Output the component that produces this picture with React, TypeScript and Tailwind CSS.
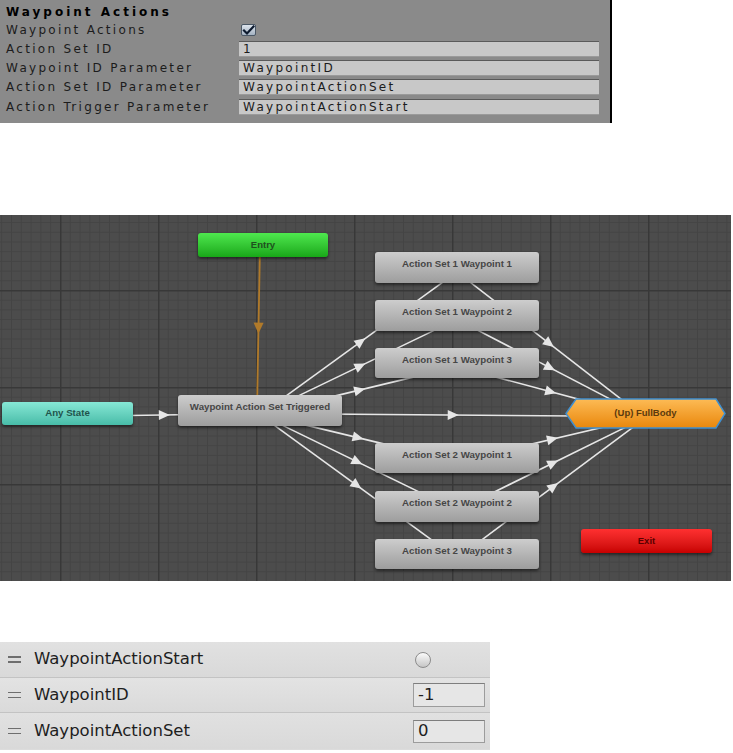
import React from "react";

type P = { x: number; y: number };

const C: Record<string, P> = {
  entry: { x: 263, y: 30 },
  a1: { x: 457, y: 52.5 },
  a2: { x: 457, y: 100.5 },
  a3: { x: 457, y: 148 },
  any: { x: 67.5, y: 198.5 },
  trig: { x: 260, y: 195.5 },
  full: { x: 645.5, y: 198.5 },
  b1: { x: 457, y: 243 },
  b2: { x: 457, y: 291.5 },
  b3: { x: 457, y: 339 },
};

function Transition({ a, b, color, off = 3.5, w = 1.6 }: { a: P; b: P; color: string; off?: number; w?: number }) {
  const dx = b.x - a.x;
  const dy = b.y - a.y;
  const L = Math.hypot(dx, dy);
  const ux = dx / L;
  const uy = dy / L;
  const px = -uy * off;
  const py = ux * off;
  const mx = (a.x + b.x) / 2 + px;
  const my = (a.y + b.y) / 2 + py;
  const tip = `${mx + ux * 6},${my + uy * 6}`;
  const l = `${mx - ux * 5 - uy * 5},${my - uy * 5 + ux * 5}`;
  const r = `${mx - ux * 5 + uy * 5},${my - uy * 5 - ux * 5}`;
  return (
    <g>
      <line x1={a.x + px} y1={a.y + py} x2={b.x + px} y2={b.y + py} stroke={color} strokeWidth={w} />
      <polygon points={`${tip} ${l} ${r}`} fill={color} />
    </g>
  );
}

function Graph() {
  const white = "#e6e6e6";
  return (
    <div className="relative mt-[92px] w-[731px] h-[366px] bg-[#4c4c4c] overflow-hidden font-['Liberation_Sans',Arial,sans-serif]">
      <svg className="absolute inset-0" width="731" height="366">
        <defs>
          <pattern id="minor" x="60" y="75" width="9.8" height="9.7" patternUnits="userSpaceOnUse">
            <path d="M0 0.5 H9.8 M0.5 0 V9.7" stroke="#444444" strokeWidth="1" fill="none" />
          </pattern>
          <pattern id="major" x="60" y="75" width="98" height="97" patternUnits="userSpaceOnUse">
            <path d="M0 0.75 H98 M0.75 0 V97" stroke="#383838" strokeWidth="1.5" fill="none" />
          </pattern>
          <linearGradient id="orange" x1="0" y1="0" x2="0" y2="1">
            <stop offset="0" stopColor="#fdbb55" />
            <stop offset="1" stopColor="#e9870c" />
          </linearGradient>
        </defs>
        <rect width="731" height="366" fill="url(#minor)" />
        <rect width="731" height="366" fill="url(#major)" />

        <Transition a={C.entry} b={C.trig} color="#b07a2a" off={3} w={1.8} />
        <Transition a={C.any} b={C.trig} color={white} off={3} />
        <Transition a={C.trig} b={C.full} color={white} off={3} />
        <Transition a={C.trig} b={C.a1} color={white} />
        <Transition a={C.trig} b={C.a2} color={white} />
        <Transition a={C.trig} b={C.a3} color={white} />
        <Transition a={C.trig} b={C.b1} color={white} />
        <Transition a={C.trig} b={C.b2} color={white} />
        <Transition a={C.trig} b={C.b3} color={white} />
        <Transition a={C.a1} b={C.full} color={white} />
        <Transition a={C.a2} b={C.full} color={white} />
        <Transition a={C.a3} b={C.full} color={white} />
        <Transition a={C.b1} b={C.full} color={white} />
        <Transition a={C.b2} b={C.full} color={white} />
        <Transition a={C.b3} b={C.full} color={white} />

        <polygon
          points="566,198.5 576,184 716,184 725,198.5 716,213 576,213"
          fill="url(#orange)"
          stroke="#3f8fd0"
          strokeWidth="1.5"
        />
      </svg>

      <div className="absolute left-[198px] top-[18px] w-[130px] h-[24px] rounded-[3px] bg-linear-to-b from-[#4ee84e] to-[#17a817] shadow-[0_2px_3px_rgba(0,0,0,0.5)] flex items-center justify-center text-[9.5px] font-bold text-[#1f4f1f]">
        Entry
      </div>

      <div className="absolute left-[375px] top-[37px] w-[164px] h-[31px] rounded-[3px] bg-linear-to-b from-[#cdcdcd] to-[#9d9d9d] shadow-[0_2px_3px_rgba(0,0,0,0.5)] flex justify-center pt-[6px] leading-[11px] text-[9.7px] font-bold text-[#464646]">
        Action Set 1 Waypoint 1
      </div>
      <div className="absolute left-[375px] top-[85px] w-[164px] h-[31px] rounded-[3px] bg-linear-to-b from-[#cdcdcd] to-[#9d9d9d] shadow-[0_2px_3px_rgba(0,0,0,0.5)] flex justify-center pt-[6px] leading-[11px] text-[9.7px] font-bold text-[#464646]">
        Action Set 1 Waypoint 2
      </div>
      <div className="absolute left-[375px] top-[133px] w-[164px] h-[30px] rounded-[3px] bg-linear-to-b from-[#cdcdcd] to-[#9d9d9d] shadow-[0_2px_3px_rgba(0,0,0,0.5)] flex justify-center pt-[6px] leading-[11px] text-[9.7px] font-bold text-[#464646]">
        Action Set 1 Waypoint 3
      </div>

      <div className="absolute left-[2px] top-[187px] w-[131px] h-[23px] rounded-[3px] bg-linear-to-b from-[#86e8d6] to-[#47bca8] shadow-[0_2px_3px_rgba(0,0,0,0.5)] flex items-center justify-center text-[9.7px] font-bold text-[#1f544c]">
        Any State
      </div>

      <div className="absolute left-[178px] top-[180px] w-[164px] h-[31px] rounded-[3px] bg-linear-to-b from-[#cdcdcd] to-[#9d9d9d] shadow-[0_2px_3px_rgba(0,0,0,0.5)] flex justify-center pt-[6px] leading-[11px] text-[9.7px] font-bold text-[#464646]">
        Waypoint Action Set Triggered
      </div>

      <div className="absolute left-[566px] top-[184px] w-[159px] h-[29px] flex items-center justify-center text-[9.5px] font-bold text-[#5b3a0e]">
        (Up) FullBody
      </div>

      <div className="absolute left-[375px] top-[228px] w-[164px] h-[30px] rounded-[3px] bg-linear-to-b from-[#cdcdcd] to-[#9d9d9d] shadow-[0_2px_3px_rgba(0,0,0,0.5)] flex justify-center pt-[6px] leading-[11px] text-[9.7px] font-bold text-[#464646]">
        Action Set 2 Waypoint 1
      </div>
      <div className="absolute left-[375px] top-[276px] w-[164px] h-[31px] rounded-[3px] bg-linear-to-b from-[#cdcdcd] to-[#9d9d9d] shadow-[0_2px_3px_rgba(0,0,0,0.5)] flex justify-center pt-[6px] leading-[11px] text-[9.7px] font-bold text-[#464646]">
        Action Set 2 Waypoint 2
      </div>
      <div className="absolute left-[375px] top-[324px] w-[164px] h-[30px] rounded-[3px] bg-linear-to-b from-[#cdcdcd] to-[#9d9d9d] shadow-[0_2px_3px_rgba(0,0,0,0.5)] flex justify-center pt-[6px] leading-[11px] text-[9.7px] font-bold text-[#464646]">
        Action Set 2 Waypoint 3
      </div>

      <div className="absolute left-[581px] top-[314px] w-[131px] h-[24px] rounded-[3px] bg-linear-to-b from-[#ff3030] to-[#c70000] shadow-[0_2px_3px_rgba(0,0,0,0.5)] flex items-center justify-center text-[9.5px] font-bold text-[#5a0000]">
        Exit
      </div>
    </div>
  );
}

function Field({ label, value }: { label: string; value: string }) {
  return (
    <div className="h-[19.3px] flex items-center">
      <div className="w-[239px] pl-[6px] whitespace-nowrap">{label}</div>
      <div className="w-[360px] h-[16px] bg-[#c8c8c8] border-t border-[#5a5a5a] border-b border-b-[#9a9a9a] pl-[4px] flex items-center leading-none whitespace-nowrap">
        {value}
      </div>
    </div>
  );
}

function Inspector() {
  return (
    <div className="w-[612px] h-[123px] bg-[#8a8a8a] border-r-2 border-black pt-[3px] font-['DejaVu_Sans',sans-serif] text-[12px] tracking-[2.3px] text-[#1c1c1c]">
      <div className="h-[18px] pl-[6px] flex items-center font-bold tracking-[3px] text-black whitespace-nowrap">
        Waypoint Actions
      </div>
      <div className="h-[18px] flex items-center">
        <div className="w-[239px] pl-[6px] whitespace-nowrap">Waypoint Actions</div>
        <div className="ml-[2px] w-[15px] h-[12px] rounded-[2px] bg-linear-to-b from-[#dde4ec] to-[#a4b2c2] border border-[#4b5866] flex items-center justify-center">
          <svg width="13" height="11" viewBox="0 0 13 11">
            <path d="M2 5.5 L5 8.5 L11.5 1.5" stroke="#0d1a2e" strokeWidth="2.2" fill="none" strokeLinecap="square" />
          </svg>
        </div>
      </div>
      <Field label="Action Set ID" value="1" />
      <Field label="Waypoint ID Parameter" value="WaypointID" />
      <Field label="Action Set ID Parameter" value="WaypointActionSet" />
      <Field label="Action Trigger Parameter" value="WaypointActionStart" />
    </div>
  );
}

function Handle() {
  return (
    <div className="ml-[8px] w-[13px] flex flex-col gap-[3.5px]">
      <div className="h-[1.5px] bg-[#6e6e6e]" />
      <div className="h-[1.5px] bg-[#6e6e6e]" />
    </div>
  );
}

function Params() {
  return (
    <div className="mt-[61px] w-[490px] h-[108px] bg-[#dcdcdc] font-['DejaVu_Sans',sans-serif] text-[16.5px] text-[#1e1e1e]">
      <div className="h-[36px] flex items-center border-b border-[#c3c3c3] bg-linear-to-b from-[#e1e1e1] to-[#d9d9d9]">
        <Handle />
        <div className="ml-[13px] flex-1 whitespace-nowrap">WaypointActionStart</div>
        <div className="w-[72px] mr-[5px] flex items-center">
          <div className="ml-[2px] w-[16px] h-[16px] rounded-full border border-[#8c8c8c] bg-linear-to-b from-[#fbfbfb] to-[#c6c6c6]" />
        </div>
      </div>
      <div className="h-[35px] flex items-center border-b border-[#c3c3c3] bg-linear-to-b from-[#e3e3e3] to-[#dadada]">
        <Handle />
        <div className="ml-[13px] flex-1 whitespace-nowrap">WaypointID</div>
        <div className="w-[72px] h-[24px] mr-[5px] bg-[#e6e6e6] border border-[#9c9c9c] border-t-[#7e7e7e] pl-[4px] flex items-center leading-none">
          -1
        </div>
      </div>
      <div className="h-[36px] flex items-center bg-linear-to-b from-[#e1e1e1] to-[#d9d9d9]">
        <Handle />
        <div className="ml-[13px] flex-1 whitespace-nowrap">WaypointActionSet</div>
        <div className="w-[72px] h-[23px] mr-[5px] bg-[#e6e6e6] border border-[#9c9c9c] border-t-[#7e7e7e] pl-[4px] flex items-center leading-none">
          0
        </div>
      </div>
    </div>
  );
}

export default function App() {
  return (
    <div className="w-[733px] h-[753px] bg-white overflow-hidden">
      <Inspector />
      <Graph />
      <Params />
    </div>
  );
}
